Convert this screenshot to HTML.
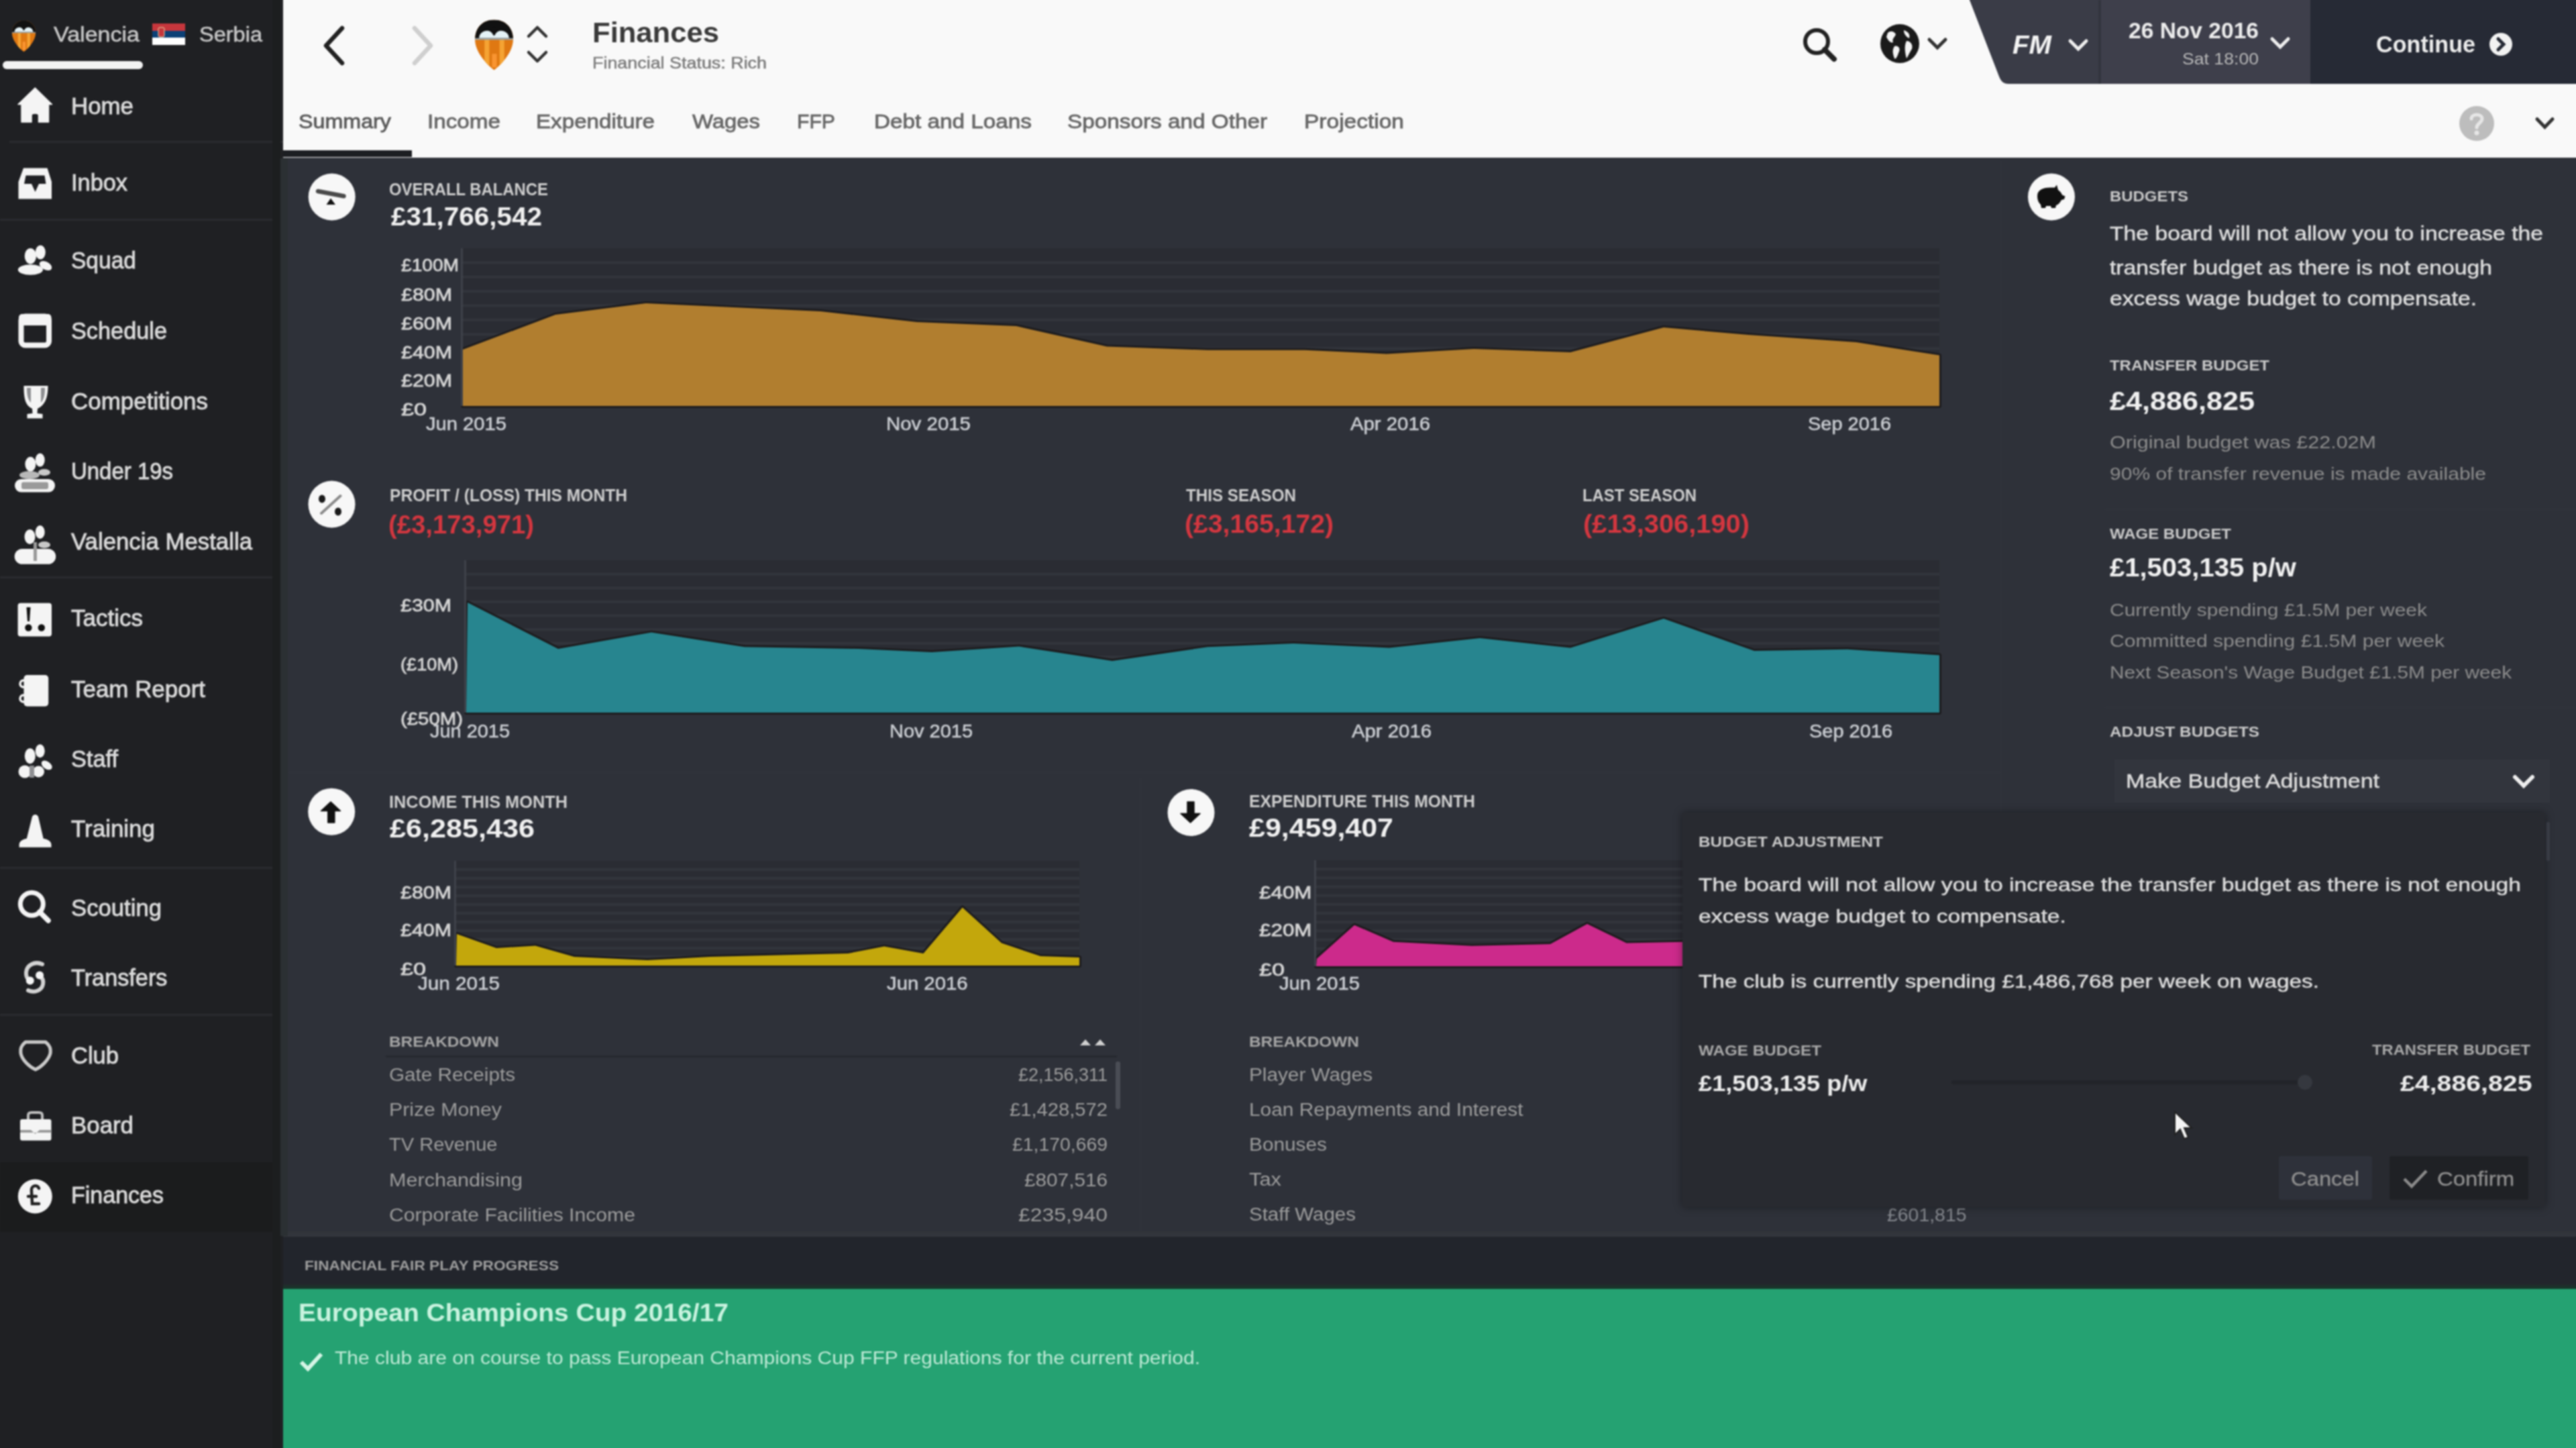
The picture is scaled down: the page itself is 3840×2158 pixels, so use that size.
<!DOCTYPE html>
<html><head><meta charset="utf-8"><title>Finances</title>
<style>
html,body{margin:0;padding:0;}
body{width:3840px;height:2158px;overflow:hidden;position:relative;background:#2c2f37;font-family:"Liberation Sans", sans-serif;}
.t{position:absolute;white-space:nowrap;transform-origin:0 50%;}
svg{display:block;}
</style></head><body>
<div id="root" style="position:absolute;left:-10px;top:-10px;width:3860px;height:2178px;filter:blur(1.1px);"><div style="position:absolute;left:10px;top:10px;width:3840px;height:2158px;">
<div style="position:absolute;left:-10px;top:-10px;width:432px;height:2178px;background:#1f2023;"></div>
<div style="position:absolute;left:422px;top:-10px;width:3428px;height:245px;background:#f9f9f9;"></div>
<div style="position:absolute;left:422px;top:235px;width:3428px;height:1607px;background:#2e3139;"></div>
<svg style="position:absolute;left:16px;top:30px" width="39" height="48" viewBox="0 0 60 76"><defs><clipPath id="cc16"><path d="M30 1 C13 1 2 13 2 30 C2 47 17 65 30 75 C43 65 58 47 58 30 C58 13 47 1 30 1 Z"/></clipPath></defs><g clip-path="url(#cc16)"><rect x="0" y="0" width="60" height="76" fill="#df7812"/><rect x="16" y="28" width="7" height="48" fill="#f5a333"/><rect x="38" y="28" width="7" height="48" fill="#f5a333"/><rect x="27" y="51" width="7" height="20" fill="#f99532"/><rect x="0" y="0" width="60" height="29" fill="#111"/><path d="M8 28 C8 21 14 17 20 17 C25 17 28 21 29 24 L31 24 C32 21 35 17 40 17 C46 17 52 21 52 28 Z" fill="#e4f2f6"/><path d="M26 16 L30 10 L34 16 L30 24 Z" fill="#111"/><rect x="0" y="28" width="60" height="2.5" fill="#9aa0a0"/></g></svg>
<div class="t" id="t0" style="left:80.0px;top:34.9px;font-size:32px;line-height:32px;color:#c6c6c6;transform:scaleX(1.0633);-webkit-text-stroke:0.6px #c6c6c6;">Valencia</div>
<svg style="position:absolute;left:227px;top:35px" width="49" height="32" viewBox="0 0 49 32"><rect width="49" height="11" fill="#c6363c"/><rect y="11" width="49" height="10" fill="#0c4076"/><rect y="21" width="49" height="11" fill="#fff"/><rect x="9" y="6" width="9" height="14" rx="2" fill="#c6363c" stroke="#e9d8a6" stroke-width="1"/></svg>
<div class="t" id="t1" style="left:297.0px;top:34.9px;font-size:32px;line-height:32px;color:#c6c6c6;transform:scaleX(1.0162);-webkit-text-stroke:0.6px #c6c6c6;">Serbia</div>
<div style="position:absolute;left:4px;top:91px;width:209px;height:12px;background:#f2f2f2;border-radius:6px;"></div>
<div style="position:absolute;left:14px;top:210px;width:408px;height:3px;background:#2a2b2f;"></div>
<div style="position:absolute;left:0px;top:326px;width:408px;height:3px;background:#2a2b2f;"></div>
<div style="position:absolute;left:0px;top:859px;width:408px;height:3px;background:#2a2b2f;"></div>
<div style="position:absolute;left:0px;top:1292px;width:408px;height:3px;background:#2a2b2f;"></div>
<div style="position:absolute;left:0px;top:1511px;width:408px;height:3px;background:#2a2b2f;"></div>
<div style="position:absolute;left:0px;top:1732px;width:422px;height:104px;background:#1b1c1d;"></div>
<div class="t" id="t2" style="left:106.0px;top:139.9px;font-size:35px;line-height:35px;color:#dadada;transform:scaleX(0.9960);-webkit-text-stroke:0.9px #dadada;">Home</div>
<div class="t" id="t3" style="left:106.0px;top:254.4px;font-size:35px;line-height:35px;color:#dadada;transform:scaleX(0.9810);-webkit-text-stroke:0.9px #dadada;">Inbox</div>
<div class="t" id="t4" style="left:106.0px;top:370.4px;font-size:35px;line-height:35px;color:#dadada;transform:scaleX(0.9583);-webkit-text-stroke:0.9px #dadada;">Squad</div>
<div class="t" id="t5" style="left:106.0px;top:474.9px;font-size:35px;line-height:35px;color:#dadada;transform:scaleX(0.9798);-webkit-text-stroke:0.9px #dadada;">Schedule</div>
<div class="t" id="t6" style="left:106.0px;top:580.4px;font-size:35px;line-height:35px;color:#dadada;transform:scaleX(0.9987);-webkit-text-stroke:0.9px #dadada;">Competitions</div>
<div class="t" id="t7" style="left:106.0px;top:684.4px;font-size:35px;line-height:35px;color:#dadada;transform:scaleX(0.9413);-webkit-text-stroke:0.9px #dadada;">Under 19s</div>
<div class="t" id="t8" style="left:106.0px;top:789.0px;font-size:35px;line-height:35px;color:#dadada;transform:scaleX(0.9937);-webkit-text-stroke:0.9px #dadada;">Valencia Mestalla</div>
<div class="t" id="t9" style="left:106.0px;top:903.4px;font-size:35px;line-height:35px;color:#dadada;transform:scaleX(1.0003);-webkit-text-stroke:0.9px #dadada;">Tactics</div>
<div class="t" id="t10" style="left:106.0px;top:1008.9px;font-size:35px;line-height:35px;color:#dadada;transform:scaleX(0.9981);-webkit-text-stroke:0.9px #dadada;">Team Report</div>
<div class="t" id="t11" style="left:106.0px;top:1113.4px;font-size:35px;line-height:35px;color:#dadada;transform:scaleX(0.9810);-webkit-text-stroke:0.9px #dadada;">Staff</div>
<div class="t" id="t12" style="left:106.0px;top:1217.4px;font-size:35px;line-height:35px;color:#dadada;transform:scaleX(0.9988);-webkit-text-stroke:0.9px #dadada;">Training</div>
<div class="t" id="t13" style="left:106.0px;top:1335.4px;font-size:35px;line-height:35px;color:#dadada;transform:scaleX(0.9911);-webkit-text-stroke:0.9px #dadada;">Scouting</div>
<div class="t" id="t14" style="left:106.0px;top:1439.0px;font-size:35px;line-height:35px;color:#dadada;transform:scaleX(0.9794);-webkit-text-stroke:0.9px #dadada;">Transfers</div>
<div class="t" id="t15" style="left:106.0px;top:1555.0px;font-size:35px;line-height:35px;color:#dadada;transform:scaleX(0.9863);-webkit-text-stroke:0.9px #dadada;">Club</div>
<div class="t" id="t16" style="left:106.0px;top:1659.4px;font-size:35px;line-height:35px;color:#dadada;transform:scaleX(0.9957);-webkit-text-stroke:0.9px #dadada;">Board</div>
<div class="t" id="t17" style="left:106.0px;top:1763.4px;font-size:35px;line-height:35px;color:#dadada;transform:scaleX(0.9716);-webkit-text-stroke:0.9px #dadada;">Finances</div>
<svg style="position:absolute;left:0;top:0" width="422" height="1840" viewBox="0 0 422 1840"><path d="M52.3 131 L27 155.5 L32 155.5 L32 182 L47 182 L47 172 C47 168 57.5 168 57.5 172 L57.5 182 L72.5 182 L72.5 155.5 L77.5 155.5 Z" fill="#f4f4f4" stroke="#f4f4f4" stroke-width="1.5" stroke-linejoin="round"/><path d="M35 250.5 L70.5 250.5 L77 271 L77 296.5 L27.5 296.5 L27.5 271 Z" fill="#f4f4f4"/><path d="M38.5 261.5 L66.5 261.5 L68.5 274 L58 274 L52.5 286 L47 274 L36 274 Z" fill="#1f2023"/><ellipse cx="45.4" cy="381.7" rx="8.7" ry="11.8" fill="#f4f4f4"/><ellipse cx="60.3" cy="376" rx="7.5" ry="10.5" fill="#f4f4f4"/><ellipse cx="45.4" cy="402" rx="18.6" ry="7.8" fill="#f4f4f4"/><ellipse cx="68" cy="396" rx="10" ry="6" transform="rotate(28 68 396)" fill="#f4f4f4"/><rect x="31.5" y="471.5" width="41.5" height="43" rx="6" fill="none" stroke="#f4f4f4" stroke-width="8"/><rect x="28" y="468" width="48.5" height="17" rx="5" fill="#f4f4f4"/><path d="M35.5 575 L71.5 575 C71.5 595 66 604 56 609 L55.5 616 L63.5 617 L63.5 623.5 L40.5 623.5 L40.5 617 L48.5 616 L48 609 C38 604 35.5 595 35.5 575 Z" fill="#f4f4f4"/><path d="M40 578 L46 578 L46 600 C42 596 40 590 40 578 Z M61 578 L67 578 C67 590 65 596 61 600 Z" fill="#8e8f92"/><ellipse cx="45.4" cy="691.8" rx="8" ry="11" fill="#f4f4f4"/><ellipse cx="59.7" cy="685.6" rx="7" ry="10" fill="#f4f4f4"/><ellipse cx="44" cy="708" rx="15" ry="6" fill="#b8b8b8"/><ellipse cx="66" cy="704" rx="9" ry="5" fill="#c8c8c8"/><rect x="22" y="714" width="60" height="19.5" rx="9.7" fill="#f4f4f4"/><rect x="32" y="718.5" width="40" height="10.5" rx="3" fill="#9a9a9a"/><ellipse cx="44.5" cy="800" rx="8" ry="11" fill="#f4f4f4"/><ellipse cx="59.7" cy="793" rx="7" ry="10" fill="#f4f4f4"/><ellipse cx="66" cy="812" rx="9" ry="5" fill="#c8c8c8"/><rect x="21.7" y="818" width="61.5" height="22.8" rx="11.4" fill="#f4f4f4"/><rect x="50" y="808" width="5" height="28" fill="#9a9a9a"/><rect x="26.6" y="898.7" width="50.4" height="49.7" rx="4" fill="#f4f4f4"/><path d="M39.5 905 L45.5 905 L44 926 L41 926 Z" fill="#111"/><circle cx="42.4" cy="935.5" r="5.2" fill="#111"/><circle cx="61.8" cy="935.5" r="5.2" fill="#111"/><rect x="35.5" y="1006" width="36.7" height="46.8" rx="5" fill="#f4f4f4"/><circle cx="35" cy="1019" r="5" fill="none" stroke="#f4f4f4" stroke-width="3.5"/><circle cx="35" cy="1041" r="5" fill="none" stroke="#f4f4f4" stroke-width="3.5"/><ellipse cx="44.8" cy="1126.7" rx="8" ry="11.5" fill="#f4f4f4"/><ellipse cx="59.7" cy="1119.3" rx="7" ry="10" fill="#f4f4f4"/><circle cx="37" cy="1150" r="9.5" fill="#f4f4f4"/><circle cx="57.5" cy="1150" r="8.5" fill="#f4f4f4"/><rect x="44" y="1141" width="7" height="18" fill="#8e8f92"/><ellipse cx="69.7" cy="1140.4" rx="9" ry="5.5" transform="rotate(35 69.7 1140.4)" fill="#f4f4f4"/><path d="M48 1217 C50 1213 55 1213 57 1217 L64.7 1249.7 C72 1251 76.5 1254 76.5 1259 L76.5 1262.8 L28.6 1262.8 L28.6 1259 C28.6 1254 33 1251 39.8 1249.7 Z" fill="#f4f4f4"/><circle cx="47.3" cy="1347.3" r="17" fill="none" stroke="#f4f4f4" stroke-width="7"/><path d="M59 1359 L72 1372" stroke="#f4f4f4" stroke-width="7.5" stroke-linecap="round"/><path d="M63 1437 C52 1432 40 1438 39 1449 C38.5 1455 41 1459 44 1461" fill="none" stroke="#d2d2d2" stroke-width="6" stroke-linecap="round"/><path d="M59 1454 C63 1457 65 1462 64 1467 C62 1477 50 1480 42 1476" fill="none" stroke="#d2d2d2" stroke-width="6" stroke-linecap="round"/><circle cx="44.8" cy="1461.6" r="6" fill="#f4f4f4"/><circle cx="59.1" cy="1453.6" r="6" fill="#f4f4f4"/><path d="M38 1553 L68 1553 C74 1558 76 1562 75 1570 C72 1580 62 1590 52.9 1594 C44 1590 33 1580 31 1570 C30 1562 32 1558 38 1553 Z" fill="none" stroke="#c9c9c9" stroke-width="5" stroke-linejoin="round"/><path d="M42 1670 L42 1662 C42 1659 44 1658 47 1658 L58 1658 C61 1658 63 1659 63 1662 L63 1670" fill="none" stroke="#bdbdbd" stroke-width="4"/><rect x="30" y="1668" width="46.5" height="31.7" rx="3" fill="#f4f4f4"/><path d="M30 1684 L46 1684 L52.5 1690 L59 1684 L76.5 1684 L76.5 1688 L30 1688 Z" fill="#9a9a9a"/><circle cx="52.3" cy="1783" r="25.5" fill="#f4f4f4"/><path d="M58 1771 C56 1765 46 1766 47 1775 L48 1794 L58 1794 M42 1783 L54 1783" fill="none" stroke="#222" stroke-width="4.5" stroke-linecap="round"/></svg>
<svg style="position:absolute;left:476px;top:36px" width="46" height="64" viewBox="0 0 46 64"><path d="M34 6 L10 32 L34 58" fill="none" stroke="#222" stroke-width="6.5" stroke-linecap="round" stroke-linejoin="round"/></svg>
<svg style="position:absolute;left:606px;top:36px" width="46" height="64" viewBox="0 0 46 64"><path d="M12 6 L36 32 L12 58" fill="none" stroke="#cfcfcf" stroke-width="6.5" stroke-linecap="round" stroke-linejoin="round"/></svg>
<svg style="position:absolute;left:706px;top:27px" width="61" height="80" viewBox="0 0 60 76"><defs><clipPath id="cc706"><path d="M30 1 C13 1 2 13 2 30 C2 47 17 65 30 75 C43 65 58 47 58 30 C58 13 47 1 30 1 Z"/></clipPath></defs><g clip-path="url(#cc706)"><rect x="0" y="0" width="60" height="76" fill="#df7812"/><rect x="16" y="28" width="7" height="48" fill="#f5a333"/><rect x="38" y="28" width="7" height="48" fill="#f5a333"/><rect x="27" y="51" width="7" height="20" fill="#f99532"/><rect x="0" y="0" width="60" height="29" fill="#111"/><path d="M8 28 C8 21 14 17 20 17 C25 17 28 21 29 24 L31 24 C32 21 35 17 40 17 C46 17 52 21 52 28 Z" fill="#e4f2f6"/><path d="M26 16 L30 10 L34 16 L30 24 Z" fill="#111"/><rect x="0" y="28" width="60" height="2.5" fill="#9aa0a0"/></g></svg>
<svg style="position:absolute;left:782px;top:34px" width="38" height="64" viewBox="0 0 38 64"><path d="M6 20 L19 7 L32 20 M6 44 L19 57 L32 44" fill="none" stroke="#333" stroke-width="4.5" stroke-linecap="round" stroke-linejoin="round"/></svg>
<div class="t" id="t18" style="left:883.0px;top:27.8px;font-size:42px;line-height:42px;color:#3a3a3a;font-weight:bold;transform:scaleX(1.0380);">Finances</div>
<div class="t" id="t19" style="left:883.0px;top:82.5px;font-size:23px;line-height:23px;color:#7c7c7c;transform:scaleX(1.1689);-webkit-text-stroke:0.5px #7c7c7c;">Financial Status: Rich</div>
<div class="t" id="t20" style="left:445.0px;top:167.4px;font-size:29px;line-height:29px;color:#5a5a5a;transform:scaleX(1.1122);-webkit-text-stroke:0.8px #5a5a5a;">Summary</div>
<div class="t" id="t21" style="left:637.0px;top:167.4px;font-size:29px;line-height:29px;color:#676767;transform:scaleX(1.1460);-webkit-text-stroke:0.8px #676767;">Income</div>
<div class="t" id="t22" style="left:799.0px;top:167.4px;font-size:29px;line-height:29px;color:#676767;transform:scaleX(1.1435);-webkit-text-stroke:0.8px #676767;">Expenditure</div>
<div class="t" id="t23" style="left:1032.0px;top:167.4px;font-size:29px;line-height:29px;color:#676767;transform:scaleX(1.1324);-webkit-text-stroke:0.8px #676767;">Wages</div>
<div class="t" id="t24" style="left:1188.0px;top:167.4px;font-size:29px;line-height:29px;color:#676767;transform:scaleX(1.0405);-webkit-text-stroke:0.8px #676767;">FFP</div>
<div class="t" id="t25" style="left:1303.0px;top:167.4px;font-size:29px;line-height:29px;color:#676767;transform:scaleX(1.1476);-webkit-text-stroke:0.8px #676767;">Debt and Loans</div>
<div class="t" id="t26" style="left:1591.0px;top:167.4px;font-size:29px;line-height:29px;color:#676767;transform:scaleX(1.1482);-webkit-text-stroke:0.8px #676767;">Sponsors and Other</div>
<div class="t" id="t27" style="left:1944.0px;top:167.4px;font-size:29px;line-height:29px;color:#676767;transform:scaleX(1.1553);-webkit-text-stroke:0.8px #676767;">Projection</div>
<div style="position:absolute;left:422px;top:224px;width:192px;height:10px;background:#1c1e22;"></div>
<svg style="position:absolute;left:2682px;top:36px" width="60" height="60" viewBox="0 0 60 60"><circle cx="26" cy="26" r="17" fill="none" stroke="#222" stroke-width="6"/><path d="M38 38 L52 52" stroke="#222" stroke-width="8" stroke-linecap="round"/></svg>
<svg style="position:absolute;left:2802px;top:35px" width="60" height="60" viewBox="0 0 60 60"><circle cx="30" cy="30" r="29" fill="#1a1a1a"/><path d="M12 14 C16 10 22 12 24 16 C22 22 18 22 20 28 C16 30 12 24 10 20 Z M22 34 C28 32 32 38 28 44 C26 50 24 54 22 52 C20 46 18 40 22 34 Z M36 10 C42 12 46 16 44 22 C40 20 36 16 36 10 Z M40 26 C46 26 50 32 48 38 C44 44 42 50 40 52 C38 44 36 34 40 26 Z" fill="#f4f4f4"/></svg>
<svg style="position:absolute;left:2872px;top:54px" width="32" height="22" viewBox="0 0 32 22"><path d="M4 5 L16 17 L28 5" fill="none" stroke="#333" stroke-width="5" stroke-linecap="round"/></svg>
<svg style="position:absolute;left:2936px;top:0px" width="904" height="125" viewBox="0 0 904 125"><path d="M0 0 L904 0 L904 125 L58 125 C50 125 47 121 44 114 Z" fill="#3a3c47"/><rect x="195" y="0" width="313" height="125" fill="#3e3f4b"/><rect x="192" y="0" width="4" height="125" fill="#32343e"/><rect x="508" y="0" width="396" height="125" fill="#262a35"/></svg>
<div style="position:absolute;left:2936px;top:-10px;width:195px;height:10px;background:#3a3c47;"></div>
<div style="position:absolute;left:3131px;top:-10px;width:313px;height:10px;background:#3e3f4b;"></div>
<div style="position:absolute;left:3444px;top:-10px;width:406px;height:10px;background:#262a35;"></div>
<div style="position:absolute;left:3840px;top:0px;width:10px;height:125px;background:#262a35;"></div>
<div class="t" id="t28" style="left:3000.0px;top:47.8px;font-size:38px;line-height:38px;color:#f4f4f4;font-weight:bold;font-style:italic;transform:scaleX(1.0569);">FM</div>
<svg style="position:absolute;left:3082px;top:56px" width="32" height="22" viewBox="0 0 32 22"><path d="M4 5 L16 17 L28 5" fill="none" stroke="#eee" stroke-width="5" stroke-linecap="round"/></svg>
<div class="t" id="t29" style="left:3173.0px;top:29.1px;font-size:33px;line-height:33px;color:#ececec;font-weight:bold;transform:scaleX(1.0167);">26 Nov 2016</div>
<div class="t" id="t30" style="left:3253.0px;top:76.5px;font-size:23px;line-height:23px;color:#b8b8b8;transform:scaleX(1.1577);">Sat 18:00</div>
<svg style="position:absolute;left:3383px;top:52px" width="32" height="24" viewBox="0 0 32 24"><path d="M4 6 L16 18 L28 6" fill="none" stroke="#eee" stroke-width="5" stroke-linecap="round"/></svg>
<div class="t" id="t31" style="left:3542.0px;top:48.4px;font-size:35px;line-height:35px;color:#ececec;font-weight:bold;transform:scaleX(0.9760);">Continue</div>
<svg style="position:absolute;left:3710px;top:48px" width="36" height="36" viewBox="0 0 36 36"><circle cx="18" cy="18" r="17" fill="#f2f2f2"/><path d="M14 10 L22 18 L14 26" fill="none" stroke="#262a35" stroke-width="5" stroke-linecap="round"/></svg>
<svg style="position:absolute;left:3665px;top:157px" width="54" height="54" viewBox="0 0 54 54"><circle cx="27" cy="27" r="26" fill="#bdbdbd"/><path d="M19 20 C19 12 35 12 35 20 C35 26 27 27 27 33" fill="none" stroke="#e6e6e6" stroke-width="5" stroke-linecap="round"/><circle cx="27" cy="41" r="3.5" fill="#e6e6e6"/></svg>
<svg style="position:absolute;left:3770px;top:165px" width="45" height="35" viewBox="3770 165 45 35"><path d="M3782 177.5 L3793.5 189.5 L3805 177.5" fill="none" stroke="#333" stroke-width="5" stroke-linecap="round"/></svg>
<svg style="position:absolute;left:455px;top:254px" width="80" height="80" viewBox="455 254 80 80"><circle cx="494.7" cy="293.5" r="35" fill="#f7f7f7"/><path d="M474 285 L512.5 292.3" stroke="#4a4a4a" stroke-width="6.5" stroke-linecap="round"/><path d="M493 295.5 L486.5 305 L500 305 Z" fill="#111"/></svg>
<div class="t" id="t32" style="left:580.0px;top:270.2px;font-size:25px;line-height:25px;color:#cdcdcd;font-weight:bold;transform:scaleX(0.9550);">OVERALL BALANCE</div>
<div class="t" id="t33" style="left:583.0px;top:303.0px;font-size:39px;line-height:39px;color:#f0f0f0;font-weight:bold;transform:scaleX(1.0374);">£31,766,542</div>
<svg style="position:absolute;left:682px;top:362px" width="2217" height="251" viewBox="0 0 2217 251"><rect x="8" y="8" width="2201" height="235" fill="#2a2c33"/><rect x="8" y="27.4" width="2201" height="4" fill="#32353c"/><rect x="8" y="48.7" width="2201" height="4" fill="#32353c"/><rect x="8" y="70.1" width="2201" height="4" fill="#32353c"/><rect x="8" y="91.5" width="2201" height="4" fill="#32353c"/><rect x="8" y="112.8" width="2201" height="4" fill="#32353c"/><rect x="8" y="134.2" width="2201" height="4" fill="#32353c"/><rect x="8" y="155.5" width="2201" height="4" fill="#32353c"/><rect x="8" y="176.9" width="2201" height="4" fill="#32353c"/><rect x="8" y="198.3" width="2201" height="4" fill="#32353c"/><rect x="8" y="219.6" width="2201" height="4" fill="#32353c"/><rect x="8" y="241.0" width="2201" height="4" fill="#32353c"/><path d="M8 243 L8.0 159.0 L146.0 107.0 L281.0 90.0 L541.0 102.0 L685.0 118.0 L833.0 124.0 L968.0 154.5 L1118.0 159.7 L1263.0 159.7 L1385.0 165.4 L1515.0 158.0 L1659.0 163.0 L1798.0 126.0 L1924.0 137.0 L2085.0 148.0 L2209.0 167.6 L2209 243 Z" fill="none" stroke="#1d1c1e" stroke-width="6" stroke-linejoin="round"/><path d="M8 243 L8.0 159.0 L146.0 107.0 L281.0 90.0 L541.0 102.0 L685.0 118.0 L833.0 124.0 L968.0 154.5 L1118.0 159.7 L1263.0 159.7 L1385.0 165.4 L1515.0 158.0 L1659.0 163.0 L1798.0 126.0 L1924.0 137.0 L2085.0 148.0 L2209.0 167.6 L2209 243 Z" fill="#b17e2f"/><rect x="5" y="8" width="3" height="235" fill="#3e4149"/></svg>
<div class="t" id="t34" style="left:598.0px;top:381.5px;font-size:26px;line-height:26px;color:#d4d4d4;transform:scaleX(1.0818);-webkit-text-stroke:0.8px #d4d4d4;">£100M</div>
<div class="t" id="t35" style="left:598.0px;top:426.0px;font-size:26px;line-height:26px;color:#d4d4d4;transform:scaleX(1.1684);-webkit-text-stroke:0.8px #d4d4d4;">£80M</div>
<div class="t" id="t36" style="left:598.0px;top:468.5px;font-size:26px;line-height:26px;color:#d4d4d4;transform:scaleX(1.1684);-webkit-text-stroke:0.8px #d4d4d4;">£60M</div>
<div class="t" id="t37" style="left:598.0px;top:512.0px;font-size:26px;line-height:26px;color:#d4d4d4;transform:scaleX(1.1684);-webkit-text-stroke:0.8px #d4d4d4;">£40M</div>
<div class="t" id="t38" style="left:598.0px;top:553.5px;font-size:26px;line-height:26px;color:#d4d4d4;transform:scaleX(1.1684);-webkit-text-stroke:0.8px #d4d4d4;">£20M</div>
<div class="t" id="t39" style="left:598.0px;top:597.0px;font-size:26px;line-height:26px;color:#d4d4d4;transform:scaleX(1.3139);-webkit-text-stroke:0.8px #d4d4d4;">£0</div>
<div class="t" id="t40" style="left:635.0px;top:618.3px;font-size:28px;line-height:28px;color:#c9ccd1;transform:scaleX(1.0415);-webkit-text-stroke:0.6px #c9ccd1;">Jun 2015</div>
<div class="t" id="t41" style="left:1321.0px;top:618.3px;font-size:28px;line-height:28px;color:#c9ccd1;transform:scaleX(1.0511);-webkit-text-stroke:0.6px #c9ccd1;">Nov 2015</div>
<div class="t" id="t42" style="left:2013.0px;top:618.3px;font-size:28px;line-height:28px;color:#c9ccd1;transform:scaleX(1.0472);-webkit-text-stroke:0.6px #c9ccd1;">Apr 2016</div>
<div class="t" id="t43" style="left:2695.0px;top:618.3px;font-size:28px;line-height:28px;color:#c9ccd1;transform:scaleX(1.0343);-webkit-text-stroke:0.6px #c9ccd1;">Sep 2016</div>
<svg style="position:absolute;left:455px;top:712px" width="80" height="80" viewBox="455 712 80 80"><circle cx="494.5" cy="751.5" r="35" fill="#f7f7f7"/><path d="M479 765 L507.5 739" stroke="#8a8a8a" stroke-width="4" stroke-linecap="round"/><ellipse cx="480" cy="743.5" rx="5" ry="6" fill="#1a1a1a"/><ellipse cx="504" cy="762.5" rx="5" ry="6" fill="#1a1a1a"/></svg>
<div class="t" id="t44" style="left:581.0px;top:725.6px;font-size:25px;line-height:25px;color:#cdcdcd;font-weight:bold;transform:scaleX(0.9841);">PROFIT / (LOSS) THIS MONTH</div>
<div class="t" id="t45" style="left:579.0px;top:762.8px;font-size:38px;line-height:38px;color:#d3363f;font-weight:bold;transform:scaleX(1.0070);">(£3,173,971)</div>
<div class="t" id="t46" style="left:1768.0px;top:725.8px;font-size:25px;line-height:25px;color:#cdcdcd;font-weight:bold;transform:scaleX(0.9676);">THIS SEASON</div>
<div class="t" id="t47" style="left:1766.0px;top:761.8px;font-size:38px;line-height:38px;color:#d3363f;font-weight:bold;transform:scaleX(1.0302);">(£3,165,172)</div>
<div class="t" id="t48" style="left:2358.5px;top:725.8px;font-size:25px;line-height:25px;color:#cdcdcd;font-weight:bold;transform:scaleX(0.9561);">LAST SEASON</div>
<div class="t" id="t49" style="left:2360.0px;top:761.8px;font-size:38px;line-height:38px;color:#d3363f;font-weight:bold;transform:scaleX(1.0480);">(£13,306,190)</div>
<svg style="position:absolute;left:687px;top:827px" width="2212" height="243" viewBox="0 0 2212 243"><rect x="8" y="8" width="2196" height="227" fill="#2a2c33"/><rect x="8" y="26.6" width="2196" height="4" fill="#32353c"/><rect x="8" y="47.3" width="2196" height="4" fill="#32353c"/><rect x="8" y="67.9" width="2196" height="4" fill="#32353c"/><rect x="8" y="88.5" width="2196" height="4" fill="#32353c"/><rect x="8" y="109.2" width="2196" height="4" fill="#32353c"/><rect x="8" y="129.8" width="2196" height="4" fill="#32353c"/><rect x="8" y="150.5" width="2196" height="4" fill="#32353c"/><rect x="8" y="171.1" width="2196" height="4" fill="#32353c"/><rect x="8" y="191.7" width="2196" height="4" fill="#32353c"/><rect x="8" y="212.4" width="2196" height="4" fill="#32353c"/><rect x="8" y="233.0" width="2196" height="4" fill="#32353c"/><path d="M8 235 L10.0 71.0 L145.0 140.0 L284.0 115.6 L423.0 137.3 L593.0 140.0 L702.0 145.0 L832.0 136.5 L971.0 158.0 L1113.0 137.3 L1241.0 132.0 L1384.0 138.6 L1519.0 124.0 L1654.0 138.6 L1793.0 95.0 L1928.0 143.0 L2067.0 140.8 L2204.0 149.5 L2204 235 Z" fill="none" stroke="#1d1c1e" stroke-width="6" stroke-linejoin="round"/><path d="M8 235 L10.0 71.0 L145.0 140.0 L284.0 115.6 L423.0 137.3 L593.0 140.0 L702.0 145.0 L832.0 136.5 L971.0 158.0 L1113.0 137.3 L1241.0 132.0 L1384.0 138.6 L1519.0 124.0 L1654.0 138.6 L1793.0 95.0 L1928.0 143.0 L2067.0 140.8 L2204.0 149.5 L2204 235 Z" fill="#27858f"/><rect x="5" y="8" width="3" height="227" fill="#3e4149"/></svg>
<div class="t" id="t50" style="left:597.0px;top:889.0px;font-size:26px;line-height:26px;color:#d4d4d4;transform:scaleX(1.1684);-webkit-text-stroke:0.8px #d4d4d4;">£30M</div>
<div class="t" id="t51" style="left:597.0px;top:977.0px;font-size:26px;line-height:26px;color:#d4d4d4;transform:scaleX(1.0442);-webkit-text-stroke:0.8px #d4d4d4;">(£10M)</div>
<div class="t" id="t52" style="left:597.0px;top:1058.0px;font-size:26px;line-height:26px;color:#d4d4d4;transform:scaleX(1.1292);-webkit-text-stroke:0.8px #d4d4d4;">(£50M)</div>
<div class="t" id="t53" style="left:641.0px;top:1076.3px;font-size:28px;line-height:28px;color:#c9ccd1;transform:scaleX(1.0328);-webkit-text-stroke:0.6px #c9ccd1;">Jun 2015</div>
<div class="t" id="t54" style="left:1326.0px;top:1076.3px;font-size:28px;line-height:28px;color:#c9ccd1;transform:scaleX(1.0344);-webkit-text-stroke:0.6px #c9ccd1;">Nov 2015</div>
<div class="t" id="t55" style="left:2015.0px;top:1076.3px;font-size:28px;line-height:28px;color:#c9ccd1;transform:scaleX(1.0472);-webkit-text-stroke:0.6px #c9ccd1;">Apr 2016</div>
<div class="t" id="t56" style="left:2697.0px;top:1076.3px;font-size:28px;line-height:28px;color:#c9ccd1;transform:scaleX(1.0343);-webkit-text-stroke:0.6px #c9ccd1;">Sep 2016</div>
<div style="position:absolute;left:430px;top:1150px;width:2553px;height:2px;background:#30333b;"></div>
<div style="position:absolute;left:1699px;top:1160px;width:2px;height:682px;background:#30333b;"></div>
<div style="position:absolute;left:2982px;top:240px;width:2px;height:970px;background:#30333b;"></div>
<svg style="position:absolute;left:455px;top:1170px" width="80" height="80" viewBox="455 1170 80 80"><circle cx="494.2" cy="1209.7" r="35" fill="#f7f7f7"/><path d="M493 1195 L478.5 1208.5 L488.8 1208.5 L488.8 1226 L498.8 1226 L498.8 1208.5 L507.5 1208.5 Z" fill="#111" stroke="#111" stroke-width="1.5" stroke-linejoin="round"/></svg>
<div class="t" id="t57" style="left:580.0px;top:1183.2px;font-size:25px;line-height:25px;color:#cdcdcd;font-weight:bold;transform:scaleX(1.0133);">INCOME THIS MONTH</div>
<div class="t" id="t58" style="left:581.0px;top:1215.0px;font-size:39px;line-height:39px;color:#f0f0f0;font-weight:bold;transform:scaleX(1.1065);">£6,285,436</div>
<svg style="position:absolute;left:672px;top:1275px" width="945" height="172" viewBox="0 0 945 172"><rect x="8" y="8" width="929" height="156" fill="#2a2c33"/><rect x="8" y="19.0" width="929" height="4" fill="#32353c"/><rect x="8" y="32.0" width="929" height="4" fill="#32353c"/><rect x="8" y="45.0" width="929" height="4" fill="#32353c"/><rect x="8" y="58.0" width="929" height="4" fill="#32353c"/><rect x="8" y="71.0" width="929" height="4" fill="#32353c"/><rect x="8" y="84.0" width="929" height="4" fill="#32353c"/><rect x="8" y="97.0" width="929" height="4" fill="#32353c"/><rect x="8" y="110.0" width="929" height="4" fill="#32353c"/><rect x="8" y="123.0" width="929" height="4" fill="#32353c"/><rect x="8" y="136.0" width="929" height="4" fill="#32353c"/><rect x="8" y="149.0" width="929" height="4" fill="#32353c"/><rect x="8" y="162.0" width="929" height="4" fill="#32353c"/><path d="M8 164 L9.0 117.0 L68.0 138.0 L126.0 134.5 L184.0 151.0 L293.0 156.0 L386.0 151.0 L592.0 146.0 L646.0 135.6 L704.5 146.0 L762.7 77.4 L821.0 130.6 L879.0 150.0 L937.0 152.0 L937 164 Z" fill="none" stroke="#1d1c1e" stroke-width="6" stroke-linejoin="round"/><path d="M8 164 L9.0 117.0 L68.0 138.0 L126.0 134.5 L184.0 151.0 L293.0 156.0 L386.0 151.0 L592.0 146.0 L646.0 135.6 L704.5 146.0 L762.7 77.4 L821.0 130.6 L879.0 150.0 L937.0 152.0 L937 164 Z" fill="#c3a70c"/><rect x="5" y="8" width="3" height="156" fill="#3e4149"/></svg>
<div class="t" id="t59" style="left:597.0px;top:1316.5px;font-size:26px;line-height:26px;color:#d4d4d4;transform:scaleX(1.1684);-webkit-text-stroke:0.8px #d4d4d4;">£80M</div>
<div class="t" id="t60" style="left:597.0px;top:1373.0px;font-size:26px;line-height:26px;color:#d4d4d4;transform:scaleX(1.1684);-webkit-text-stroke:0.8px #d4d4d4;">£40M</div>
<div class="t" id="t61" style="left:597.0px;top:1431.3px;font-size:26px;line-height:26px;color:#d4d4d4;transform:scaleX(1.3139);-webkit-text-stroke:0.8px #d4d4d4;">£0</div>
<div class="t" id="t62" style="left:623.0px;top:1452.3px;font-size:28px;line-height:28px;color:#c9ccd1;transform:scaleX(1.0589);-webkit-text-stroke:0.6px #c9ccd1;">Jun 2015</div>
<div class="t" id="t63" style="left:1322.0px;top:1451.8px;font-size:28px;line-height:28px;color:#c9ccd1;transform:scaleX(1.0458);-webkit-text-stroke:0.6px #c9ccd1;">Jun 2016</div>
<div class="t" id="t64" style="left:580.0px;top:1542.1px;font-size:22px;line-height:22px;color:#a5a5a5;font-weight:bold;transform:scaleX(1.1089);">BREAKDOWN</div>
<svg style="position:absolute;left:1608px;top:1546px" width="42" height="14" viewBox="0 0 42 14"><path d="M2 12 L10 3 L18 12 Z M24 12 L32 3 L40 12 Z" fill="#d0d0d0"/></svg>
<div style="position:absolute;left:575px;top:1573px;width:1090px;height:3px;background:#262930;"></div>
<div class="t" id="t65" style="left:580.0px;top:1588.7px;font-size:27px;line-height:27px;color:#9c9c9c;transform:scaleX(1.0988);">Gate Receipts</div>
<div class="t" id="t66" style="left:1518.0px;top:1588.7px;font-size:27px;line-height:27px;color:#9c9c9c;transform:scaleX(0.9989);">£2,156,311</div>
<div class="t" id="t67" style="left:580.0px;top:1641.0px;font-size:27px;line-height:27px;color:#9c9c9c;transform:scaleX(1.1195);">Prize Money</div>
<div class="t" id="t68" style="left:1505.0px;top:1641.0px;font-size:27px;line-height:27px;color:#9c9c9c;transform:scaleX(1.0804);">£1,428,572</div>
<div class="t" id="t69" style="left:580.0px;top:1693.3px;font-size:27px;line-height:27px;color:#9c9c9c;transform:scaleX(1.0760);">TV Revenue</div>
<div class="t" id="t70" style="left:1509.0px;top:1693.3px;font-size:27px;line-height:27px;color:#9c9c9c;transform:scaleX(1.0508);">£1,170,669</div>
<div class="t" id="t71" style="left:580.0px;top:1745.6px;font-size:27px;line-height:27px;color:#9c9c9c;transform:scaleX(1.1333);">Merchandising</div>
<div class="t" id="t72" style="left:1527.0px;top:1745.6px;font-size:27px;line-height:27px;color:#9c9c9c;transform:scaleX(1.1010);">£807,516</div>
<div class="t" id="t73" style="left:580.0px;top:1797.9px;font-size:27px;line-height:27px;color:#9c9c9c;transform:scaleX(1.1167);">Corporate Facilities Income</div>
<div class="t" id="t74" style="left:1518.0px;top:1797.9px;font-size:27px;line-height:27px;color:#9c9c9c;transform:scaleX(1.1809);">£235,940</div>
<div style="position:absolute;left:1663px;top:1582px;width:7px;height:71px;background:#4a4d55;border-radius:3px;"></div>
<svg style="position:absolute;left:1736px;top:1171px" width="80" height="80" viewBox="1736 1171 80 80"><circle cx="1775.5" cy="1211" r="35" fill="#f7f7f7"/><path d="M1774.5 1226 L1760 1212.5 L1770 1212.5 L1770 1195 L1780 1195 L1780 1212.5 L1789 1212.5 Z" fill="#111" stroke="#111" stroke-width="1.5" stroke-linejoin="round"/></svg>
<div class="t" id="t75" style="left:1862.0px;top:1182.2px;font-size:25px;line-height:25px;color:#cdcdcd;font-weight:bold;transform:scaleX(0.9903);">EXPENDITURE THIS MONTH</div>
<div class="t" id="t76" style="left:1862.0px;top:1213.8px;font-size:39px;line-height:39px;color:#f0f0f0;font-weight:bold;transform:scaleX(1.1014);">£9,459,407</div>
<svg style="position:absolute;left:1954px;top:1274px" width="564" height="174" viewBox="0 0 564 174"><rect x="8" y="8" width="548" height="158" fill="#2a2c33"/><rect x="8" y="19.2" width="548" height="4" fill="#32353c"/><rect x="8" y="32.3" width="548" height="4" fill="#32353c"/><rect x="8" y="45.5" width="548" height="4" fill="#32353c"/><rect x="8" y="58.7" width="548" height="4" fill="#32353c"/><rect x="8" y="71.8" width="548" height="4" fill="#32353c"/><rect x="8" y="85.0" width="548" height="4" fill="#32353c"/><rect x="8" y="98.2" width="548" height="4" fill="#32353c"/><rect x="8" y="111.3" width="548" height="4" fill="#32353c"/><rect x="8" y="124.5" width="548" height="4" fill="#32353c"/><rect x="8" y="137.7" width="548" height="4" fill="#32353c"/><rect x="8" y="150.8" width="548" height="4" fill="#32353c"/><rect x="8" y="164.0" width="548" height="4" fill="#32353c"/><path d="M8 166 L9.0 154.8 L65.0 104.7 L123.0 129.8 L240.0 135.8 L357.0 133.0 L412.0 103.0 L470.6 131.4 L556.0 129.8 L556 166 Z" fill="none" stroke="#1d1c1e" stroke-width="6" stroke-linejoin="round"/><path d="M8 166 L9.0 154.8 L65.0 104.7 L123.0 129.8 L240.0 135.8 L357.0 133.0 L412.0 103.0 L470.6 131.4 L556.0 129.8 L556 166 Z" fill="#cc2a8b"/><rect x="5" y="8" width="3" height="158" fill="#3e4149"/></svg>
<div class="t" id="t77" style="left:1877.0px;top:1316.6px;font-size:26px;line-height:26px;color:#d4d4d4;transform:scaleX(1.2068);-webkit-text-stroke:0.8px #d4d4d4;">£40M</div>
<div class="t" id="t78" style="left:1877.0px;top:1373.0px;font-size:26px;line-height:26px;color:#d4d4d4;transform:scaleX(1.2068);-webkit-text-stroke:0.8px #d4d4d4;">£20M</div>
<div class="t" id="t79" style="left:1877.0px;top:1431.8px;font-size:26px;line-height:26px;color:#d4d4d4;transform:scaleX(1.3139);-webkit-text-stroke:0.8px #d4d4d4;">£0</div>
<div class="t" id="t80" style="left:1907.0px;top:1451.8px;font-size:28px;line-height:28px;color:#c9ccd1;transform:scaleX(1.0415);-webkit-text-stroke:0.6px #c9ccd1;">Jun 2015</div>
<div class="t" id="t81" style="left:1861.5px;top:1541.8px;font-size:22px;line-height:22px;color:#a5a5a5;font-weight:bold;transform:scaleX(1.1089);">BREAKDOWN</div>
<div class="t" id="t82" style="left:1861.5px;top:1588.9px;font-size:27px;line-height:27px;color:#9c9c9c;transform:scaleX(1.1014);">Player Wages</div>
<div class="t" id="t83" style="left:1861.5px;top:1641.0px;font-size:27px;line-height:27px;color:#9c9c9c;transform:scaleX(1.1063);">Loan Repayments and Interest</div>
<div class="t" id="t84" style="left:1861.5px;top:1693.1px;font-size:27px;line-height:27px;color:#9c9c9c;transform:scaleX(1.1039);">Bonuses</div>
<div class="t" id="t85" style="left:1861.5px;top:1745.2px;font-size:27px;line-height:27px;color:#9c9c9c;transform:scaleX(1.1420);">Tax</div>
<div class="t" id="t86" style="left:1861.5px;top:1797.3px;font-size:27px;line-height:27px;color:#9c9c9c;transform:scaleX(1.0922);">Staff Wages</div>
<div class="t" id="t87" style="left:2813.0px;top:1798.1px;font-size:27px;line-height:27px;color:#85888e;transform:scaleX(1.0522);">£601,815</div>
<svg style="position:absolute;left:3018px;top:254px" width="80" height="80" viewBox="3018 254 80 80"><circle cx="3058" cy="293.5" r="35" fill="#f7f7f7"/><path d="M3037 292 C3037 283 3046 279.5 3056 279.5 L3063 279.5 L3066 275.5 L3068 283 C3071 285 3073 288 3074 290.5 L3078.5 292.5 L3077 297 L3073 298 C3071 302 3068 305 3065 306 L3064 310 L3058 310 L3057 307 L3050 307 L3049 310 L3043 310 L3042 305 C3039 302 3037 298 3037 292 Z" fill="#111"/></svg>
<div class="t" id="t88" style="left:3145.0px;top:281.8px;font-size:22px;line-height:22px;color:#c8c8c8;font-weight:bold;transform:scaleX(1.0877);">BUDGETS</div>
<div class="t" id="t89" style="left:3145.0px;top:334.4px;font-size:29px;line-height:29px;color:#dedede;transform:scaleX(1.1616);-webkit-text-stroke:0.5px #dedede;">The board will not allow you to increase the</div>
<div class="t" id="t90" style="left:3145.0px;top:384.6px;font-size:29px;line-height:29px;color:#dedede;transform:scaleX(1.1630);-webkit-text-stroke:0.5px #dedede;">transfer budget as there is not enough</div>
<div class="t" id="t91" style="left:3145.0px;top:431.2px;font-size:29px;line-height:29px;color:#dedede;transform:scaleX(1.1620);-webkit-text-stroke:0.5px #dedede;">excess wage budget to compensate.</div>
<div class="t" id="t92" style="left:3145.0px;top:533.9px;font-size:22px;line-height:22px;color:#c8c8c8;font-weight:bold;transform:scaleX(1.0878);">TRANSFER BUDGET</div>
<div class="t" id="t93" style="left:3145.0px;top:578.2px;font-size:39px;line-height:39px;color:#f0f0f0;font-weight:bold;transform:scaleX(1.1065);">£4,886,825</div>
<div class="t" id="t94" style="left:3145.0px;top:646.2px;font-size:26px;line-height:26px;color:#8c8c8c;transform:scaleX(1.1739);">Original budget was £22.02M</div>
<div class="t" id="t95" style="left:3145.0px;top:692.8px;font-size:26px;line-height:26px;color:#8c8c8c;transform:scaleX(1.1552);">90% of transfer revenue is made available</div>
<div style="position:absolute;left:3138px;top:758px;width:702px;height:2px;background:#30333b;"></div>
<div class="t" id="t96" style="left:3145.0px;top:785.3px;font-size:22px;line-height:22px;color:#c8c8c8;font-weight:bold;transform:scaleX(1.0888);">WAGE BUDGET</div>
<div class="t" id="t97" style="left:3145.0px;top:826.0px;font-size:39px;line-height:39px;color:#f0f0f0;font-weight:bold;transform:scaleX(1.0257);">£1,503,135 p/w</div>
<div class="t" id="t98" style="left:3145.0px;top:895.8px;font-size:26px;line-height:26px;color:#8c8c8c;transform:scaleX(1.1524);">Currently spending £1.5M per week</div>
<div class="t" id="t99" style="left:3145.0px;top:942.4px;font-size:26px;line-height:26px;color:#8c8c8c;transform:scaleX(1.1587);">Committed spending £1.5M per week</div>
<div class="t" id="t100" style="left:3145.0px;top:989.0px;font-size:26px;line-height:26px;color:#8c8c8c;transform:scaleX(1.1457);">Next Season's Wage Budget £1.5M per week</div>
<div style="position:absolute;left:3138px;top:1053px;width:702px;height:2px;background:#30333b;"></div>
<div class="t" id="t101" style="left:3145.0px;top:1080.4px;font-size:22px;line-height:22px;color:#c8c8c8;font-weight:bold;transform:scaleX(1.1057);">ADJUST BUDGETS</div>
<div style="position:absolute;left:3152px;top:1132px;width:649px;height:64px;background:#32353d;"></div>
<div class="t" id="t102" style="left:3169.0px;top:1150.4px;font-size:29px;line-height:29px;color:#dcdcdc;transform:scaleX(1.1724);-webkit-text-stroke:0.5px #dcdcdc;">Make Budget Adjustment</div>
<svg style="position:absolute;left:3744px;top:1150px" width="36" height="30" viewBox="0 0 36 30"><path d="M5 8 L18 21 L31 8" fill="none" stroke="#eee" stroke-width="6" stroke-linecap="round"/></svg>
<div style="position:absolute;left:2508px;top:1211px;width:1286px;height:588px;background:#282a30;box-shadow:0 0 12px rgba(0,0,0,0.4);"></div>
<div style="position:absolute;left:3796px;top:1225px;width:5px;height:58px;background:#383b44;border-radius:2px;"></div>
<div class="t" id="t103" style="left:2532.0px;top:1244.4px;font-size:22px;line-height:22px;color:#c8c8c8;font-weight:bold;transform:scaleX(1.1065);">BUDGET ADJUSTMENT</div>
<div class="t" id="t104" style="left:2532.0px;top:1304.7px;font-size:28px;line-height:28px;color:#dcdcdc;transform:scaleX(1.2044);-webkit-text-stroke:0.5px #dcdcdc;">The board will not allow you to increase the transfer budget as there is not enough</div>
<div class="t" id="t105" style="left:2532.0px;top:1351.9px;font-size:28px;line-height:28px;color:#dcdcdc;transform:scaleX(1.2057);-webkit-text-stroke:0.5px #dcdcdc;">excess wage budget to compensate.</div>
<div class="t" id="t106" style="left:2532.0px;top:1448.8px;font-size:28px;line-height:28px;color:#dcdcdc;transform:scaleX(1.1909);-webkit-text-stroke:0.5px #dcdcdc;">The club is currently spending £1,486,768 per week on wages.</div>
<div class="t" id="t107" style="left:2532.0px;top:1554.8px;font-size:22px;line-height:22px;color:#a8a8a8;font-weight:bold;transform:scaleX(1.1009);">WAGE BUDGET</div>
<div class="t" id="t108" style="left:2532.0px;top:1597.0px;font-size:34px;line-height:34px;color:#ececec;font-weight:bold;transform:scaleX(1.0644);">£1,503,135 p/w</div>
<div class="t" id="t109" style="left:3536.0px;top:1554.4px;font-size:22px;line-height:22px;color:#a8a8a8;font-weight:bold;transform:scaleX(1.0787);">TRANSFER BUDGET</div>
<div class="t" id="t110" style="left:3577.5px;top:1597.0px;font-size:34px;line-height:34px;color:#ececec;font-weight:bold;transform:scaleX(1.1547);">£4,886,825</div>
<div style="position:absolute;left:2909px;top:1610px;width:524px;height:6px;background:#222429;border-radius:3px;"></div>
<svg style="position:absolute;left:3424px;top:1601px" width="24" height="24" viewBox="0 0 24 24"><circle cx="12" cy="12" r="11" fill="#35383f"/></svg>
<div style="position:absolute;left:3397px;top:1723px;width:139px;height:65px;background:#2e313a;border-radius:3px;"></div>
<div class="t" id="t111" style="left:3415.0px;top:1741.6px;font-size:30px;line-height:30px;color:#8e8e8e;transform:scaleX(1.0922);-webkit-text-stroke:0.4px #8e8e8e;">Cancel</div>
<div style="position:absolute;left:3562px;top:1723px;width:207px;height:65px;background:#1f2125;border-radius:3px;"></div>
<svg style="position:absolute;left:3575px;top:1735px" width="50" height="45" viewBox="3575 1735 50 45"><path d="M3584 1757 L3595 1768 L3617 1745" fill="none" stroke="#8a8a8a" stroke-width="4.5"/></svg>
<div class="t" id="t112" style="left:3633.0px;top:1741.6px;font-size:30px;line-height:30px;color:#8e8e8e;transform:scaleX(1.0951);-webkit-text-stroke:0.4px #8e8e8e;">Confirm</div>
<svg style="position:absolute;left:3240px;top:1655px" width="30" height="46" viewBox="0 0 30 46"><path d="M2 2 L2 36 L10 28 L16 42 L22 40 L16 26 L27 26 Z" fill="#f4f4f4" stroke="#222" stroke-width="2"/></svg>
<div style="position:absolute;left:422px;top:1842px;width:3428px;height:79px;background:#22252c;"></div>
<div class="t" id="t113" style="left:454.0px;top:1875.2px;font-size:21px;line-height:21px;color:#9e9e9e;font-weight:bold;transform:scaleX(1.0803);">FINANCIAL FAIR PLAY PROGRESS</div>
<div style="position:absolute;left:422px;top:1921px;width:3428px;height:247px;background:#25a272;"></div>
<div class="t" id="t114" style="left:445.0px;top:1937.7px;font-size:37px;line-height:37px;color:#c9f3df;font-weight:bold;transform:scaleX(1.0532);">European Champions Cup 2016/17</div>
<svg style="position:absolute;left:446px;top:2014px" width="36" height="30" viewBox="0 0 36 30"><path d="M3 16 L13 26 L33 4" fill="none" stroke="#d6f5e6" stroke-width="6"/></svg>
<div class="t" id="t115" style="left:499.0px;top:2011.4px;font-size:27px;line-height:27px;color:#bfead6;transform:scaleX(1.1124);">The club are on course to pass European Champions Cup FFP regulations for the current period.</div>
<div style="position:absolute;left:422px;top:1834px;width:3418px;height:9px;background:linear-gradient(#2f3239,#35383e);"></div>
<div style="position:absolute;left:422px;top:1914px;width:3418px;height:7px;background:linear-gradient(#22292b,#173a2c);"></div>
<div style="position:absolute;left:406px;top:-10px;width:12px;height:2178px;background:#1c1e1f;"></div>
<div style="position:absolute;left:418px;top:236px;width:11px;height:1606px;background:#2b3033;"></div>
</div></div>
</body></html>
